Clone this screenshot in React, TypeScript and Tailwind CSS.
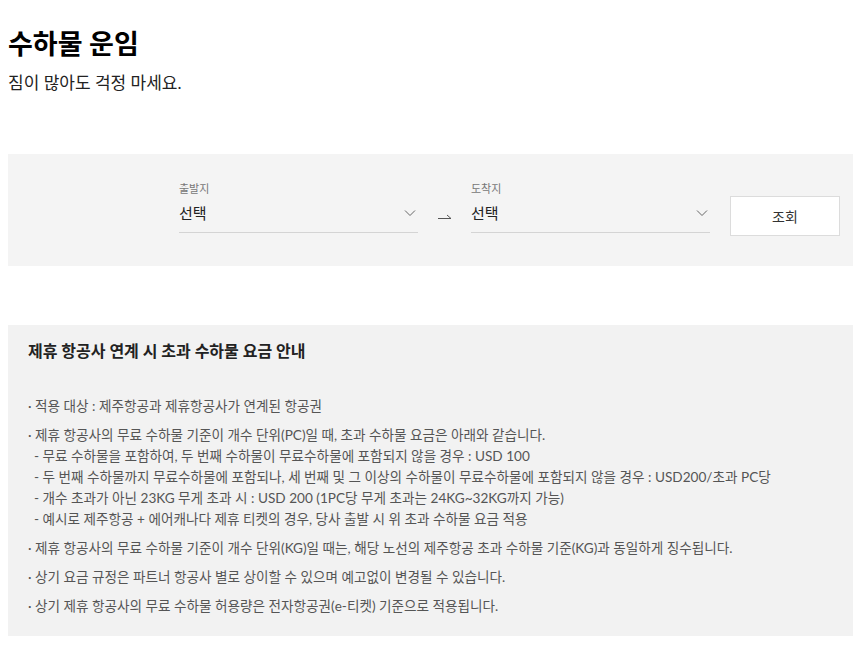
const FONT = "font-['Lato','Noto_Sans_CJK_KR',sans-serif]";

function Chevron() {
  return (
    <svg width="12" height="8" viewBox="0 0 12 8" className="shrink-0">
      <path d="M1 1.5 L6 6.5 L11 1.5" fill="none" stroke="#666" strokeWidth="1" />
    </svg>
  );
}

function Arrow() {
  return (
    <svg width="16" height="8" viewBox="0 0 16 8">
      <path d="M1 6.5 H14 L10 3" fill="none" stroke="#555" strokeWidth="1" />
    </svg>
  );
}

function Select({ label }: { label: string }) {
  return (
    <div className="w-[239px]">
      <p className="text-[11px] text-[#777] leading-[11px] mb-[10px]">{label}</p>
      <div className="flex items-center justify-between border-b border-[#d4d4d4] pb-[10px] pr-[2px]">
        <span className="text-[15px] text-[#222] leading-[18px]">선택</span>
        <Chevron />
      </div>
    </div>
  );
}

const subs = [
  '- 무료 수하물을 포함하여, 두 번째 수하물이 무료수하물에 포함되지 않을 경우 : USD 100',
  '- 두 번째 수하물까지 무료수하물에 포함되나, 세 번째 및 그 이상의 수하물이 무료수하물에 포함되지 않을 경우 : USD200/초과 PC당',
  '- 개수 초과가 아닌 23KG 무게 초과 시 : USD 200 (1PC당 무게 초과는 24KG~32KG까지 가능)',
  '- 예시로 제주항공 + 에어캐나다 제휴 티켓의 경우, 당사 출발 시 위 초과 수하물 요금 적용',
];

export default function App() {
  return (
    <div className={`${FONT} bg-white min-h-[648px] pl-2 pt-[26px]`}>
      <h1 className="text-[27px] font-bold text-black leading-[36px]">수하물 운임</h1>
      <p className="text-[17px] text-[#222] mt-[10px] leading-[22px]">짐이 많아도 걱정 마세요.</p>

      <div className="mt-[60px] h-[112px] bg-[#f4f4f4] flex items-start pl-[171px] pt-[29px]">
        <Select label="출발지" />
        <div className="w-[53px] flex justify-center pt-[29px]">
          <Arrow />
        </div>
        <Select label="도착지" />
        <button className="ml-[20px] mt-[13px] w-[110px] h-[40px] bg-white border border-[#dcdcdc] text-[14px] text-[#333]">
          조회
        </button>
      </div>

      <div className="mt-[59px] bg-[#f2f2f2] pl-5 pt-[15px] pb-[19px] text-[13.6px] text-[#555]">
        <h2 className="text-[16px] font-bold text-[#222] leading-[22px]">제휴 항공사 연계 시 초과 수하물 요금 안내</h2>
        <ul className="mt-[34px] space-y-[8px]">
          <li className="leading-[21px]">· 적용 대상 : 제주항공과 제휴항공사가 연계된 항공권</li>
          <li className="leading-[21px]">
            · 제휴 항공사의 무료 수하물 기준이 개수 단위(PC)일 때, 초과 수하물 요금은 아래와 같습니다.
            {subs.map((s) => (
              <p key={s} className="pl-[6px]">{s}</p>
            ))}
          </li>
          <li className="leading-[21px]">· 제휴 항공사의 무료 수하물 기준이 개수 단위(KG)일 때는, 해당 노선의 제주항공 초과 수하물 기준(KG)과 동일하게 징수됩니다.</li>
          <li className="leading-[21px]">· 상기 요금 규정은 파트너 항공사 별로 상이할 수 있으며 예고없이 변경될 수 있습니다.</li>
          <li className="leading-[21px]">· 상기 제휴 항공사의 무료 수하물 허용량은 전자항공권(e-티켓) 기준으로 적용됩니다.</li>
        </ul>
      </div>
    </div>
  );
}
